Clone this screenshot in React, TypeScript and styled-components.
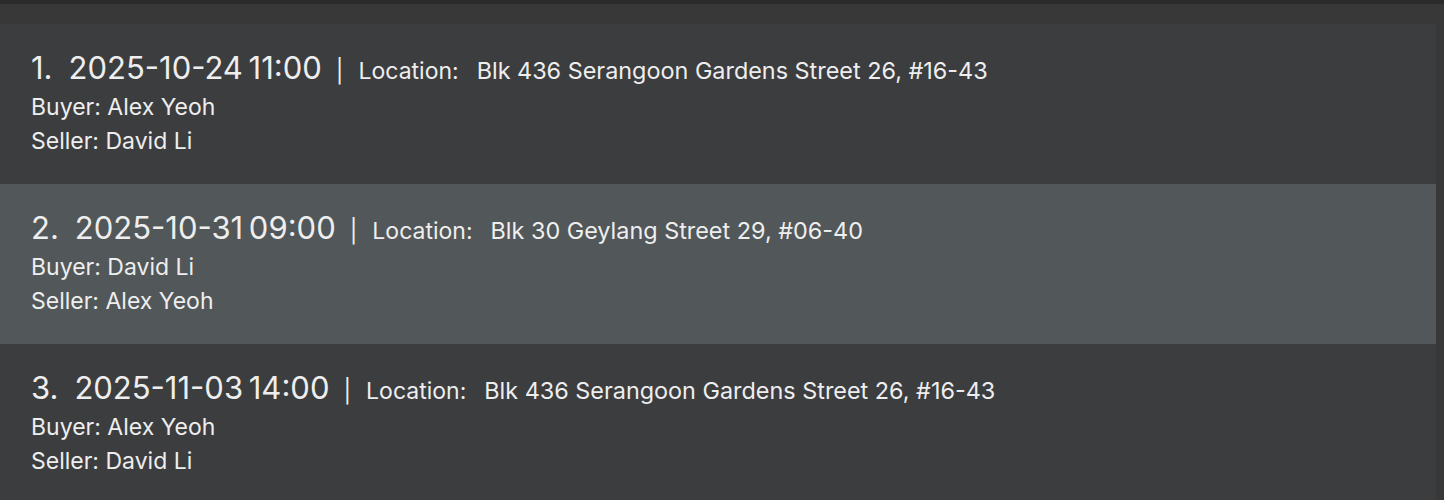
import React from "react";
import styled, { createGlobalStyle } from "styled-components";

const Global = createGlobalStyle`
  html, body { margin: 0; padding: 0; background: #383838; }
  body { font-family: Inter, "Noto Sans", sans-serif; }
`;

const Page = styled.div`
  width: 1444px;
  height: 500px;
  overflow: hidden;
  background: #383838;
  border-top: 4px solid #2b2b2b;
  box-sizing: border-box;
  padding-top: 20px;
  padding-right: 8px;
`;

const List = styled.div`
  display: flex;
  flex-direction: column;
`;

const Card = styled.div<{ $selected?: boolean }>`
  height: 160px;
  box-sizing: border-box;
  background: ${(p) => (p.$selected ? "#525759" : "#3c3d3f")};
  padding: 25px 0 0 31px;
  display: flex;
  flex-direction: column;
  color: #eeeeee;
`;

const TitleRow = styled.div`
  display: flex;
  align-items: baseline;
  height: 41px;
`;

const Index = styled.span`
  font-size: 31px;
  margin-right: 16px;
`;

const DateTime = styled.span`
  font-size: 31px;
  word-spacing: -3px;
`;

const Sep = styled.span`
  font-size: 23px;
  margin: 0 15px 0 14px;
`;

const Label = styled.span`
  font-size: 23px;
  margin-right: 18px;
`;

const Value = styled.span`
  font-size: 23.4px;
`;

const Line = styled.div`
  font-size: 23px;
  height: 34px;
  line-height: 34px;
`;

type Item = { date: string; location: string; buyer: string; seller: string };

const items: Item[] = [
  { date: "2025-10-24 11:00", location: "Blk 436 Serangoon Gardens Street 26, #16-43", buyer: "Alex Yeoh", seller: "David Li" },
  { date: "2025-10-31 09:00", location: "Blk 30 Geylang Street 29, #06-40", buyer: "David Li", seller: "Alex Yeoh" },
  { date: "2025-11-03 14:00", location: "Blk 436 Serangoon Gardens Street 26, #16-43", buyer: "Alex Yeoh", seller: "David Li" },
];

export default function App() {
  return (
    <>
      <Global />
      <Page>
        <List>
          {items.map((it, i) => (
            <Card key={i} $selected={i === 1}>
              <TitleRow>
                <Index>{i + 1}.</Index>
                <DateTime>{it.date}</DateTime>
                <Sep>|</Sep>
                <Label>Location:</Label>
                <Value>{it.location}</Value>
              </TitleRow>
              <Line>Buyer: {it.buyer}</Line>
              <Line>Seller: {it.seller}</Line>
            </Card>
          ))}
        </List>
      </Page>
    </>
  );
}
